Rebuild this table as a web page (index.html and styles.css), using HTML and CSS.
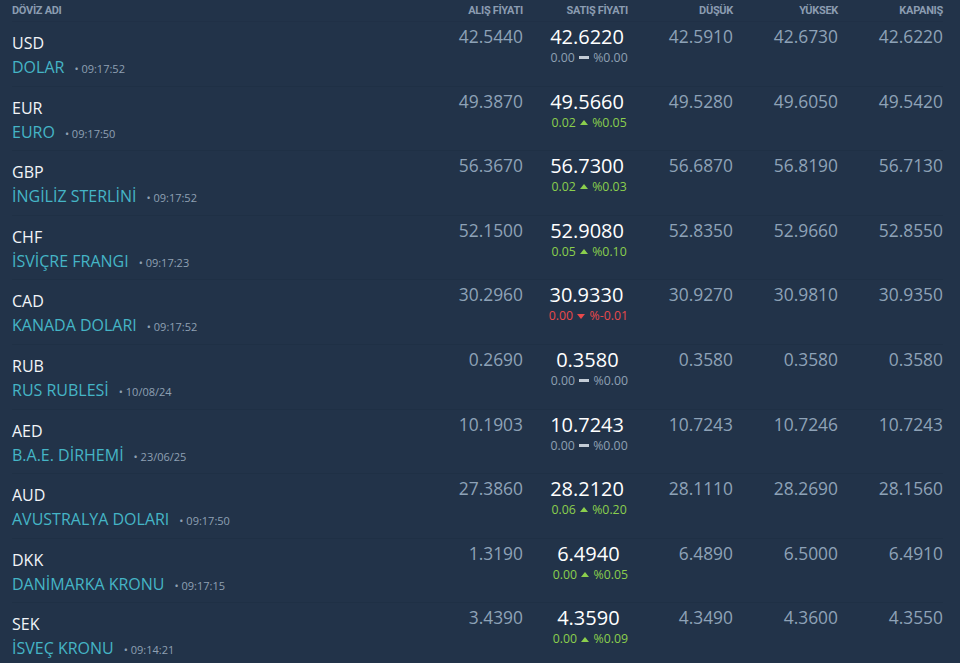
FILE: index.html
```html
<!DOCTYPE html>
<html lang="tr">
<head>
<meta charset="utf-8">
<title>Döviz</title>
<link rel="stylesheet" href="styles.css">
</head>
<body>
<div class="table">
  <div class="head">
    <div class="h-name">DÖVİZ ADI</div>
    <div class="h-num">ALIŞ FİYATI</div>
    <div class="h-num">SATIŞ FİYATI</div>
    <div class="h-num">DÜŞÜK</div>
    <div class="h-num">YÜKSEK</div>
    <div class="h-num">KAPANIŞ</div>
  </div>

  <div class="row">
    <div class="cur"><div class="code">USD</div><div class="name">DOLAR<span class="time">• 09:17:52</span></div></div>
    <div class="num">42.5440</div>
    <div class="sell"><div class="sell-in"><div class="price">42.6220</div><div class="chg flat">0.00 <i class="ic-flat"></i> %0.00</div></div></div>
    <div class="num">42.5910</div>
    <div class="num">42.6730</div>
    <div class="num">42.6220</div>
  </div>

  <div class="row">
    <div class="cur"><div class="code">EUR</div><div class="name">EURO<span class="time">• 09:17:50</span></div></div>
    <div class="num">49.3870</div>
    <div class="sell"><div class="sell-in"><div class="price">49.5660</div><div class="chg up">0.02 <i class="ic-up"></i> %0.05</div></div></div>
    <div class="num">49.5280</div>
    <div class="num">49.6050</div>
    <div class="num">49.5420</div>
  </div>

  <div class="row">
    <div class="cur"><div class="code">GBP</div><div class="name">İNGİLİZ STERLİNİ<span class="time">• 09:17:52</span></div></div>
    <div class="num">56.3670</div>
    <div class="sell"><div class="sell-in"><div class="price">56.7300</div><div class="chg up">0.02 <i class="ic-up"></i> %0.03</div></div></div>
    <div class="num">56.6870</div>
    <div class="num">56.8190</div>
    <div class="num">56.7130</div>
  </div>

  <div class="row">
    <div class="cur"><div class="code">CHF</div><div class="name">İSVİÇRE FRANGI<span class="time">• 09:17:23</span></div></div>
    <div class="num">52.1500</div>
    <div class="sell"><div class="sell-in"><div class="price">52.9080</div><div class="chg up">0.05 <i class="ic-up"></i> %0.10</div></div></div>
    <div class="num">52.8350</div>
    <div class="num">52.9660</div>
    <div class="num">52.8550</div>
  </div>

  <div class="row">
    <div class="cur"><div class="code">CAD</div><div class="name">KANADA DOLARI<span class="time">• 09:17:52</span></div></div>
    <div class="num">30.2960</div>
    <div class="sell"><div class="sell-in"><div class="price">30.9330</div><div class="chg down">0.00 <i class="ic-down"></i> %-0.01</div></div></div>
    <div class="num">30.9270</div>
    <div class="num">30.9810</div>
    <div class="num">30.9350</div>
  </div>

  <div class="row">
    <div class="cur"><div class="code">RUB</div><div class="name">RUS RUBLESİ<span class="time">• 10/08/24</span></div></div>
    <div class="num">0.2690</div>
    <div class="sell"><div class="sell-in"><div class="price">0.3580</div><div class="chg flat">0.00 <i class="ic-flat"></i> %0.00</div></div></div>
    <div class="num">0.3580</div>
    <div class="num">0.3580</div>
    <div class="num">0.3580</div>
  </div>

  <div class="row">
    <div class="cur"><div class="code">AED</div><div class="name">B.A.E. DİRHEMİ<span class="time">• 23/06/25</span></div></div>
    <div class="num">10.1903</div>
    <div class="sell"><div class="sell-in"><div class="price">10.7243</div><div class="chg flat">0.00 <i class="ic-flat"></i> %0.00</div></div></div>
    <div class="num">10.7243</div>
    <div class="num">10.7246</div>
    <div class="num">10.7243</div>
  </div>

  <div class="row">
    <div class="cur"><div class="code">AUD</div><div class="name">AVUSTRALYA DOLARI<span class="time">• 09:17:50</span></div></div>
    <div class="num">27.3860</div>
    <div class="sell"><div class="sell-in"><div class="price">28.2120</div><div class="chg up">0.06 <i class="ic-up"></i> %0.20</div></div></div>
    <div class="num">28.1110</div>
    <div class="num">28.2690</div>
    <div class="num">28.1560</div>
  </div>

  <div class="row">
    <div class="cur"><div class="code">DKK</div><div class="name">DANİMARKA KRONU<span class="time">• 09:17:15</span></div></div>
    <div class="num">1.3190</div>
    <div class="sell"><div class="sell-in"><div class="price">6.4940</div><div class="chg up">0.00 <i class="ic-up"></i> %0.05</div></div></div>
    <div class="num">6.4890</div>
    <div class="num">6.5000</div>
    <div class="num">6.4910</div>
  </div>

  <div class="row">
    <div class="cur"><div class="code">SEK</div><div class="name">İSVEÇ KRONU<span class="time">• 09:14:21</span></div></div>
    <div class="num">3.4390</div>
    <div class="sell"><div class="sell-in"><div class="price">4.3590</div><div class="chg up">0.00 <i class="ic-up"></i> %0.09</div></div></div>
    <div class="num">4.3490</div>
    <div class="num">4.3600</div>
    <div class="num">4.3550</div>
  </div>
</div>
</body>
</html>
```

FILE: styles.css
```css
html, body {
  margin: 0;
  padding: 0;
  background: #223349;
  overflow: hidden;
}
body {
  font-family: "Open Sans", "Noto Sans", sans-serif;
  color: #e9eef3;
}
.table {
  padding: 0 17px 0 12px;
}
.head, .row {
  display: grid;
  grid-template-columns: 1fr repeat(5, 105px);
}
.head {
  height: 22px;
  align-items: center;
  font-family: Roboto, "Open Sans", sans-serif;
  font-weight: 700;
  font-size: 11px;
  letter-spacing: -0.3px;
  color: #8b9cb1;
  border-bottom: 1px solid #203046;
  box-sizing: border-box;
}
.h-name { text-align: left; }
.h-num { text-align: right; }
.row {
  height: 64.6px;
  box-sizing: border-box;
  border-bottom: 1px solid #1f3045;
}
.cur {
  padding-top: 10px;
}
.code {
  font-size: 16px;
  line-height: 22px;
  color: #f2f5f8;
}
.name {
  font-size: 16px;
  line-height: 24px;
  margin-top: 1px;
  color: #45b5c6;
  white-space: nowrap;
}
.time {
  font-size: 11px;
  color: #8fa0b3;
  margin-left: 10px;
}
.num {
  text-align: right;
  font-size: 17.4px;
  line-height: 22px;
  padding-top: 3px;
  color: #8ea2b7;
}
.sell {
  display: flex;
  justify-content: flex-end;
  padding-top: 3px;
}
.sell-in {
  text-align: center;
}
.price {
  font-size: 20px;
  line-height: 24px;
  color: #ffffff;
  margin-right: 4px;
}
.chg {
  font-size: 12.3px;
  line-height: 18px;
  white-space: nowrap;
}
.chg.flat { color: #8fa0b3; }
.chg.up { color: #8bcf4d; }
.chg.down { color: #e8494b; }
.chg i {
  display: inline-block;
  vertical-align: middle;
  margin: 0 1px 2px;
}
.ic-flat {
  width: 10px;
  height: 3px;
  background: #c3ccd6;
}
.ic-up {
  width: 0;
  height: 0;
  border-left: 4px solid transparent;
  border-right: 4px solid transparent;
  border-bottom: 5px solid #8bcf4d;
}
.ic-down {
  width: 0;
  height: 0;
  border-left: 4px solid transparent;
  border-right: 4px solid transparent;
  border-top: 5px solid #e8494b;
}
```
